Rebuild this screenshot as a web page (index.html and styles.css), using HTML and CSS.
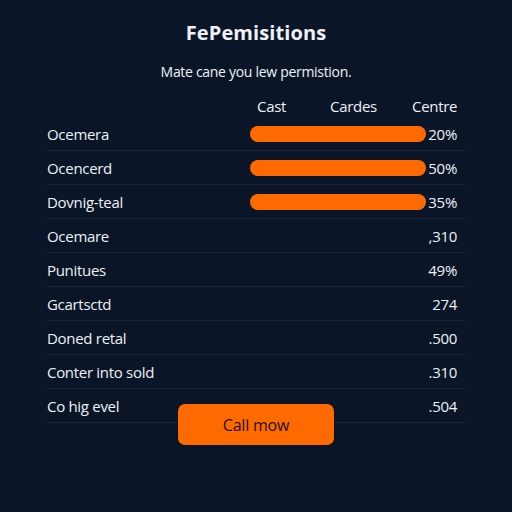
FILE: index.html
```html
<!DOCTYPE html>
<html lang="en">
<head>
  <meta charset="UTF-8">
  <meta name="viewport" content="width=device-width, initial-scale=1.0">
  <title>FePemisitions</title>
  <link rel="stylesheet" href="styles.css">
</head>
<body>
  <div class="panel">
    <h1>FePemisitions</h1>
    <p class="subtitle">Mate cane you lew permistion.</p>

    <div class="table-head">
      <span></span>
      <span>Cast</span>
      <span>Cardes</span>
      <span>Centre</span>
    </div>

    <ul class="perm-list">
      <li><span class="label">Ocemera</span><span class="bar"></span><span class="value">20%</span></li>
      <li><span class="label">Ocencerd</span><span class="bar"></span><span class="value">50%</span></li>
      <li><span class="label">Dovnig-teal</span><span class="bar"></span><span class="value">35%</span></li>
      <li><span class="label">Ocemare</span><span></span><span class="value">,310</span></li>
      <li><span class="label">Punitues</span><span></span><span class="value">49%</span></li>
      <li><span class="label">Gcartsctd</span><span></span><span class="value">274</span></li>
      <li><span class="label">Doned retal</span><span></span><span class="value">.500</span></li>
      <li><span class="label">Conter into sold</span><span></span><span class="value">.310</span></li>
      <li><span class="label">Co hig evel</span><span></span><span class="value">.504</span></li>
    </ul>
  </div>

  <button class="call-btn">Call mow</button>
</body>
</html>
```

FILE: styles.css
```css
body {
  margin: 0;
  height: 512px;
  background-color: #0a1628;
  color: #eef1f5;
  font-family: "Open Sans", "Liberation Sans", sans-serif;
  overflow: hidden;
}

.panel {
  width: 420px;
  margin-left: 46px;
}

h1 {
  margin: 21px 0 0;
  font-size: 20px;
  line-height: 24px;
  font-weight: 700;
  text-align: center;
  letter-spacing: 0.1px;
}

.subtitle {
  margin: 18px 0 0;
  font-size: 14px;
  line-height: 18px;
  text-align: center;
  letter-spacing: -0.3px;
}

.table-head {
  display: grid;
  grid-template-columns: 211px 73px 82px auto;
  margin-top: 16px;
  font-size: 15px;
  line-height: 18px;
  letter-spacing: -0.3px;
}

.perm-list {
  list-style: none;
  margin: 2px 0 0;
  padding: 0;
}

.perm-list li {
  display: grid;
  grid-template-columns: 204px 176px 31px;
  align-items: center;
  height: 33px;
  border-bottom: 1px solid #17253a;
  font-size: 15px;
  letter-spacing: -0.3px;
}

.label {
  padding-left: 1px;
}

.bar {
  height: 16px;
  border-radius: 8px;
  background-color: #ff6a00;
}

.value {
  text-align: right;
}

.call-btn {
  position: absolute;
  left: 178px;
  top: 404px;
  width: 156px;
  height: 41px;
  border: none;
  border-radius: 7px;
  background-color: #ff6a00;
  color: #1c1210;
  font-family: "Open Sans", "Liberation Sans", sans-serif;
  font-size: 16px;
  letter-spacing: -0.2px;
  cursor: pointer;
}
```
